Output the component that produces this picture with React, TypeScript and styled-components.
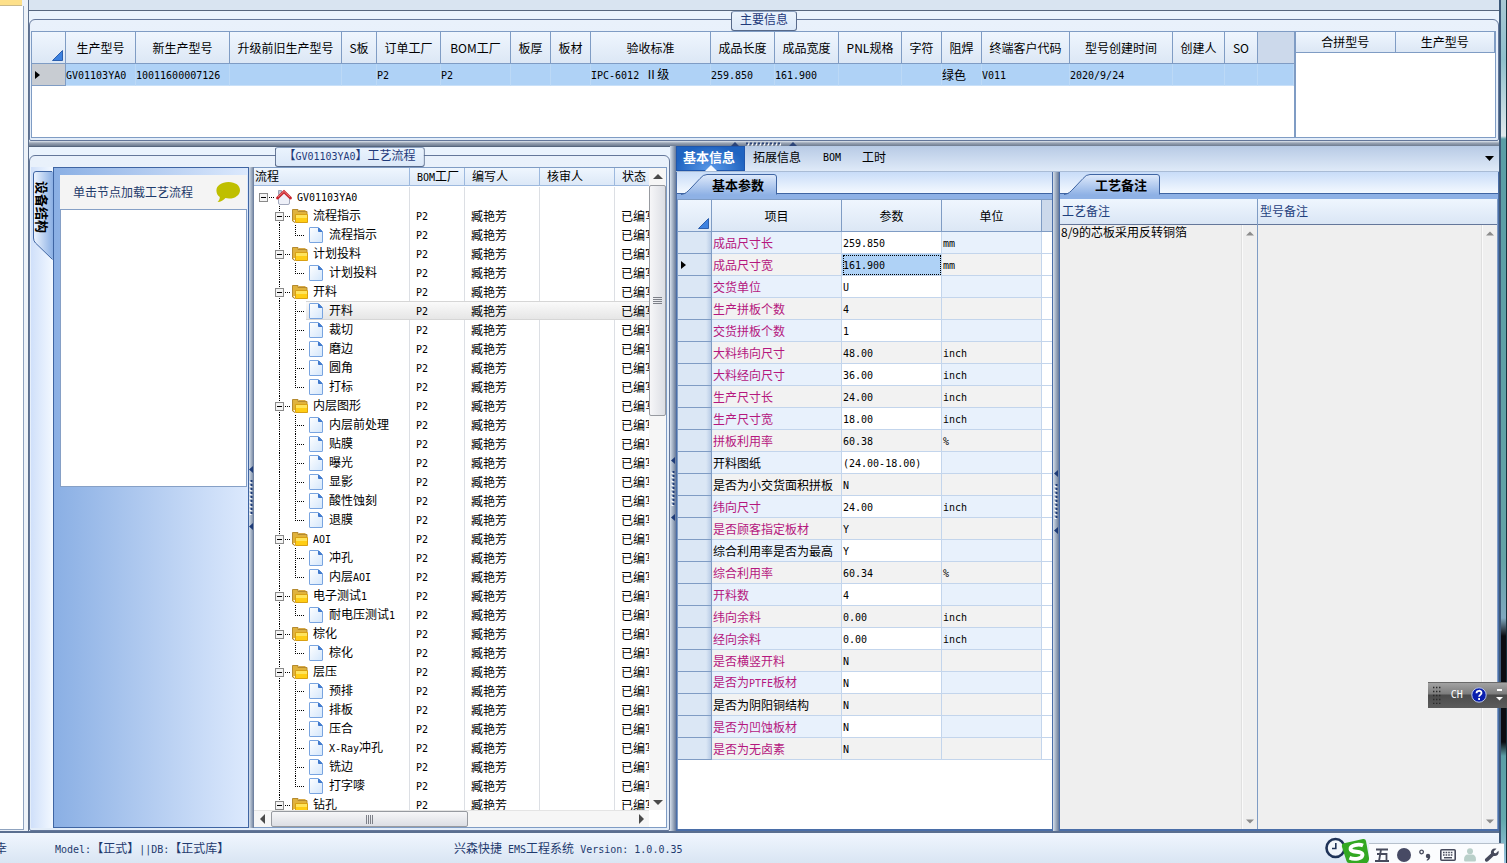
import React from 'react';
import styled, { createGlobalStyle, css } from 'styled-components';

const GlobalStyle = createGlobalStyle`
  * { box-sizing: border-box; }
  body { margin: 0; overflow: hidden; }
  button { border: 0; padding: 0; background: none; font: inherit; color: inherit; }
  table { border-collapse: separate; border-spacing: 0; table-layout: fixed; }
  th, td { padding: 0; font-weight: 400; text-align: left; white-space: nowrap; overflow: hidden; }
`;

const sans = '"Noto Sans CJK SC", "Noto Sans", sans-serif';
const line = '#7f9cc4';

/* ---------- shared text ---------- */

const Half = styled.span`
  font-family: "DejaVu Sans Mono", monospace;
  font-size: 10px;
  white-space: pre;
`;

const Txt = ({ children }: { children: string }) => (
  <>
    {children.split(/([\x20-\x7e]+)/).map((part, i) =>
      i % 2 ? <Half key={i}>{part}</Half> : part,
    )}
  </>
);

/* ---------- page frame ---------- */

const Page = styled.div`
  height: 100vh;
  display: flex;
  font: 12px/16px ${sans};
  color: #000;
  background: #e4ebf4;
`;

const AppWindow = styled.div`
  flex: 1;
  min-width: 0;
  display: flex;
  flex-direction: column;
`;

const DesktopEdge = styled.div`
  width: 8px;
  border-left: 2px solid #3c5878;
  border-right: 1px solid #16303c;
  background: linear-gradient(#a8c8d4 0, #8fc0cc 60px, #dfe9ec 136px, #5a9ea6 139px, #63a3a6 560px, #7fa8bf 618px, #0b0d12 636px, #0b0d12 742px, #5a9ea6 756px, #63a9ad 820px, #9cc4e0 100%);
`;

const Body = styled.div`
  flex: 1;
  min-height: 0;
  display: flex;
`;

const LeftDock = styled.div`
  width: 28px;
  display: flex;
  flex-direction: column;
  background: linear-gradient(90deg, #e6ecf5, #eef3f9);

  &::before {
    content: '';
    width: 22px;
    height: 5px;
    background: #fde08a;
    border-bottom: 1px solid #c9b98a;
  }
  &::after {
    content: '';
    flex: 1;
    width: 23px;
    margin-bottom: 1px;
    background: #fff;
    border-right: 1px solid #8fa3bf;
    border-bottom: 1px solid #8fa3bf;
  }
`;

const Workspace = styled.main`
  flex: 1;
  min-width: 0;
  display: flex;
  flex-direction: column;
  border-left: 1px solid #5c6f8c;
`;

const Ribbon = styled.div`
  height: 10px;
  background: #d9e4f1;
`;

const Group = styled.section<{ $width?: number }>`
  display: flex;
  flex-direction: column;
  padding-top: 8px;
  border-top: 1px solid #56667e;
  background: #eaf3fd;
  min-height: 0;
  ${(p) => p.$width && css`flex: 0 0 ${p.$width}px;`}
`;

const Frame = styled.div`
  position: relative;
  flex: 1;
  min-height: 0;
  display: flex;
  padding: 11px 2px 2px 1px;
  border: 1px solid #64779a;
  border-radius: 6px 6px 2px 2px;
  background: linear-gradient(#e9f1fb, #e3edf9);
`;

const Legend = styled.h2`
  position: absolute;
  top: -9px;
  left: 50%;
  transform: translateX(-50%);
  height: 20px;
  margin: 0;
  padding: 0 8px;
  font: 12px/14px ${sans};
  white-space: nowrap;
  color: #1f3a7a;
  border: 1px solid #56698a;
  border-top-color: #8ea3c2;
  border-radius: 3px;
  background: linear-gradient(#eaf3fd, #dbe8f8);
`;

/* ---------- splitters ---------- */

const SplitH = styled.div`
  height: 5px;
  display: flex;
  justify-content: center;
  background: linear-gradient(#dfe6ef, #9aa5b5 40%, #6d7b90);
`;

const SplitV = styled.div<{ $w: number }>`
  flex: 0 0 ${(p) => p.$w}px;
  display: flex;
  flex-direction: column;
  justify-content: center;
  align-items: center;
  background: linear-gradient(90deg, #d5dfeb, #94a3b8 60%, #66799a);
`;

const GripV = () => (
  <svg width="5" height="64" viewBox="0 0 5 64" aria-hidden="true">
    <path d="M4 0v7L0 3.500zM4 57v7L0 60.500z" fill="#1f3c78" />
    <path d="M1.500 15v34" stroke="#fff" strokeWidth="2" strokeDasharray="2 2" />
    <path d="M2.500 14v34" stroke="#1f3c78" strokeWidth="2" strokeDasharray="2 2" />
  </svg>
);

const GripH = () => (
  <svg width="66" height="5" viewBox="0 0 66 5" aria-hidden="true">
    <path d="M0 5h8L4 1zM58 5h8L62 1z" fill="#2c4478" />
    <path d="M16 3.500h35" stroke="#fff" strokeWidth="2" strokeDasharray="2 2" />
    <path d="M15 2.500h35" stroke="#2c4478" strokeWidth="2" strokeDasharray="2 2" />
  </svg>
);

/* ---------- data grids ---------- */

const GridPane = styled.div<{ $width?: number }>`
  flex: ${(p) => (p.$width ? `0 0 ${p.$width}px` : '1')};
  min-width: 0;
  height: 107px;
  overflow: hidden;
  border: 1px solid ${line};
  background: #fff;
`;

const Grid = styled.table`
  width: 100%;
`;

const HeadCell = styled.th<{ $h: number; $last?: boolean }>`
  height: ${(p) => p.$h}px;
  text-align: center;
  border-right: 1px solid ${line};
  border-bottom: 1px solid ${line};
  background: linear-gradient(#eff6fe, #dce7f5);
  ${(p) => p.$last && css`border-right: 0; background: #ccd9eb;`}
`;

const CornerCell = styled(HeadCell)`
  text-align: right;
  vertical-align: bottom;
  svg { display: block; margin: 0 2px 2px auto; }
`;

const Corner = ({ h }: { h: number }) => (
  <CornerCell $h={h} aria-label="全选">
    <svg width="11" height="11" viewBox="0 0 11 11" aria-hidden="true">
      <path d="M10.500 .5v10H.5z" fill="#3d82e0" stroke="#2c5fae" />
    </svg>
  </CornerCell>
);

const MainCell = styled.td`
  height: 22px;
  background: #afd2f6;
  border-right: 1px solid #bcd9f6;
  border-bottom: 1px solid #c9e0f8;
`;

const MainRowHead = styled(MainCell)`
  background: #c8ccd2;
  border-color: ${line};
  svg { display: block; margin-left: 3px; }
`;

const RowArrow = () => (
  <svg width="5" height="8" viewBox="0 0 5 8" aria-label="当前行">
    <path d="M0 0l5 4-5 4z" fill="#000" />
  </svg>
);

const mainCols: [string, number, string][] = [
  ['生产型号', 70, 'GV01103YA0'],
  ['新生产型号', 94, '10011600007126'],
  ['升级前旧生产型号', 112, ''],
  ['S板', 35, ''],
  ['订单工厂', 64, 'P2'],
  ['BOM工厂', 70, 'P2'],
  ['板厚', 40, ''],
  ['板材', 40, ''],
  ['验收标准', 120, 'IPC-6012 Ⅱ级'],
  ['成品长度', 64, '259.850'],
  ['成品宽度', 64, '161.900'],
  ['PNL规格', 63, ''],
  ['字符', 40, ''],
  ['阻焊', 40, '绿色'],
  ['终端客户代码', 88, 'V011'],
  ['型号创建时间', 103, '2020/9/24'],
  ['创建人', 52, ''],
  ['SO', 33, ''],
];

const MainGrid = () => (
  <GridPane>
    <Grid>
      <colgroup>
        <col width={34} />
        {mainCols.map(([name, w]) => <col key={name} width={w} />)}
        <col />
      </colgroup>
      <thead>
        <tr>
          <Corner h={32} />
          {mainCols.map(([name]) => <HeadCell key={name} $h={32}>{name}</HeadCell>)}
          <HeadCell $h={32} $last />
        </tr>
      </thead>
      <tbody>
        <tr>
          <MainRowHead><RowArrow /></MainRowHead>
          {mainCols.map(([name, , value]) => <MainCell key={name}><Txt>{value}</Txt></MainCell>)}
          <MainCell />
        </tr>
      </tbody>
    </Grid>
  </GridPane>
);

const MergeGrid = () => (
  <GridPane $width={201}>
    <Grid>
      <thead>
        <tr>
          <HeadCell $h={21}>合拼型号</HeadCell>
          <HeadCell $h={21}>生产型号</HeadCell>
        </tr>
      </thead>
    </Grid>
  </GridPane>
);

/* ---------- structure side panel ---------- */

const Nav = styled.div`
  flex: 0 0 218px;
  display: flex;
`;

const NavStrip = styled.div`
  flex: 0 0 21px;
  padding: 4px 0 0 2px;
  background: linear-gradient(90deg, #d0e0fa, #f2f8ff);
`;

const NavTab = styled.button`
  position: relative;
  display: block;
  width: 20px;
  height: 90px;
  z-index: 1;
  svg { position: absolute; inset: 0; }
`;

const NavTabText = styled.span`
  position: relative;
  display: block;
  height: 90px;
  padding-top: 10px;
  writing-mode: vertical-rl;
  text-orientation: sideways;
  text-align: left;
  font: bold 13px/18px ${sans};
`;

const NavPanel = styled.div`
  flex: 1;
  padding: 7px 1px 0 6px;
  border: 1px solid #3f65a3;
  background: linear-gradient(90deg, #8aafe4, #dce9fd);
`;

const NavHint = styled.div`
  display: flex;
  align-items: center;
  justify-content: space-between;
  height: 34px;
  padding: 0 6px 0 13px;
  color: #1f3a6a;
  background: #f4f4f4;
`;

const NavBox = styled.div`
  height: 278px;
  background: #fff;
  border: 1px solid #86a0c6;
`;

const Bubble = () => (
  <svg width="25" height="22" viewBox="0 0 25 22" aria-hidden="true">
    <path d="M12.500 1C19.500 1 24 4.600 24 9.200s-4.500 8.300-11 8.300c-1.200 0-2.500-.1-3.500-.4C7.500 19.500 5 21 1.500 21c1.500-1.300 2.300-3 2.300-5C1.500 14.500.4 12 .4 9.500.4 4.600 5.500 1 12.500 1z" fill="#bfbf00" />
  </svg>
);

/* ---------- process tree ---------- */

const TreePane = styled.div`
  flex: 1;
  min-width: 0;
  display: grid;
  grid-template-columns: minmax(0, 1fr) 17px;
  grid-template-rows: minmax(0, 1fr) 17px;
  border: 1px solid ${line};
  border-left: 0;
  background: #fff;
`;

const TreeView = styled.div`
  overflow: hidden;
`;

const TreeTable = styled.table`
  width: 434px;
`;

const TreeHead = styled.th`
  height: 18px;
  line-height: 15px;
  vertical-align: top;
  padding-left: 7px;
  border-right: 1px solid #9db9de;
  border-bottom: 1px solid #9db9de;
  background: linear-gradient(#eff6fe, #dce8f7);
  &:first-child { padding-left: 1px; }
`;

const TreeCell = styled.td<{ $on?: boolean }>`
  height: 19px;
  padding-left: 6px;
  border-right: 1px solid #dcdfe4;
  ${(p) => p.$on && css`
    background: linear-gradient(#d6d6d6 0 1px, #fafafa 1px, #e6e6e6 18px, #d6d6d6 18px);
    border-right-color: transparent;
  `}
  &:first-child {
    padding-left: 3px;
    ${(p) => p.$on && css`
      background-repeat: no-repeat;
      background-position: 52px 0;
    `}
  }
`;

const TreeGap = styled.td`
  height: 1px;
`;

const NodeLabel = styled.div`
  display: flex;
  height: 19px;
  line-height: 17px;
  svg { flex: none; }
`;

const dots = { stroke: '#000', strokeWidth: 1, strokeDasharray: '1 1', fill: 'none' };

const Minus = ({ x }: { x: number }) => (
  <g>
    <rect x={x + 0.5} y="6.500" width="8" height="8" fill="#f4f4f4" stroke="#8a8a8a" />
    <path d={`M${x + 2} 10.500h5`} stroke="#000" />
  </g>
);

const RootGlyph = () => (
  <svg width="40" height="19" viewBox="0 0 40 19" aria-hidden="true">
    <path d="M12 10.500h5" {...dots} />
    <Minus x={2} />
    <path d="M21.500 16V9.500L27 4.500l5.500 5V16q0 1.500-1.500 1.500h-8q-1.500 0-1.500-1.500z" fill="#eef0f8" stroke="#a2a8bc" />
    <path d="M21.500 3.500h3v4h-3z" fill="#c4c8d6" stroke="#9ca2b6" />
    <path d="M20.500 11L27 4.800 33.500 11" fill="none" stroke="#c9252d" strokeWidth="2.800" strokeLinecap="round" />
    <path d="M21 10L27 4.400 33 10" fill="none" stroke="#f09090" strokeWidth=".8" />
  </svg>
);

const FolderGlyph = () => (
  <svg width="56" height="19" viewBox="0 0 56 19" aria-hidden="true">
    <path d="M22.500 0v19" {...dots} />
    <path d="M28 10.500h5" {...dots} />
    <Minus x={18} />
    <path d="M35.500 15v-11.500h5.500v2h9v3" fill="#e0b23c" stroke="#b58a30" />
    <path d="M41.500 4.500h7" stroke="#d8ab4a" />
    <path d="M38.500 8.500h12v8h-12z" fill="#ffcd14" stroke="#d9a012" />
    <path d="M39 9h11v3H39z" fill="#ffe45c" />
    <path d="M35.500 15l2.500 1.500" fill="none" stroke="#a87a1e" />
  </svg>
);

const FileGlyph = ({ last }: { last?: boolean }) => (
  <svg width="72" height="19" viewBox="0 0 72 19" aria-hidden="true">
    <defs>
      <linearGradient id="sheet" x1="0" y1="0" x2="1" y2="1">
        <stop offset="0" stopColor="#fff" />
        <stop offset="1" stopColor="#d3e6fb" />
      </linearGradient>
    </defs>
    <path d="M22.500 0v19" {...dots} />
    <path d={last ? 'M38.500 0v11' : 'M38.500 0v19'} {...dots} />
    <path d="M38 10.500h10" {...dots} />
    <path d="M53 2.500h8.500l4 4V17q0 .5-.5.5H53q-.5 0-.5-.5V3q0-.5.5-.5z" fill="url(#sheet)" stroke="#78a4e0" />
    <path d="M61.500 3v3.500h3.500z" fill="#3e78cc" stroke="#3e78cc" />
  </svg>
);

const groups: [string, string[]][] = [
  ['流程指示', ['流程指示']],
  ['计划投料', ['计划投料']],
  ['开料', ['开料', '裁切', '磨边', '圆角', '打标']],
  ['内层图形', ['内层前处理', '贴膜', '曝光', '显影', '酸性蚀刻', '退膜']],
  ['AOI', ['冲孔', '内层AOI']],
  ['电子测试1', ['耐电压测试1']],
  ['棕化', ['棕化']],
  ['层压', ['预排', '排板', '压合', 'X-Ray冲孔', '铣边', '打字嘜']],
  ['钻孔', []],
];

const TreeRow = ({ glyph, name, root, on }: { glyph: React.ReactNode; name: string; root?: boolean; on?: boolean }) => (
  <tr>
    <TreeCell $on={on}><NodeLabel>{glyph}<span><Txt>{name}</Txt></span></NodeLabel></TreeCell>
    <TreeCell $on={on}>{!root && <Txt>P2</Txt>}</TreeCell>
    <TreeCell $on={on}>{!root && '臧艳芳'}</TreeCell>
    <TreeCell $on={on} />
    <TreeCell $on={on}>{!root && '已编写'}</TreeCell>
  </tr>
);

const Tree = () => (
  <TreeView>
    <TreeTable>
      <colgroup>
        <col width={156} /><col width={55} /><col width={75} /><col width={75} /><col />
      </colgroup>
      <thead>
        <tr>
          <TreeHead>流程</TreeHead>
          <TreeHead><Txt>BOM工厂</Txt></TreeHead>
          <TreeHead>编写人</TreeHead>
          <TreeHead>核审人</TreeHead>
          <TreeHead>状态</TreeHead>
        </tr>
      </thead>
      <tbody>
        <tr><TreeGap colSpan={5} /></tr>
        <TreeRow glyph={<RootGlyph />} name="GV01103YA0" root />
        {groups.map(([name, children], g) => (
          <React.Fragment key={name}>
            <TreeRow glyph={<FolderGlyph />} name={name} />
            {children.map((child, i) => (
              <TreeRow
                key={child}
                glyph={<FileGlyph last={i === children.length - 1} />}
                name={child}
                on={g === 2 && i === 0}
              />
            ))}
          </React.Fragment>
        ))}
      </tbody>
    </TreeTable>
  </TreeView>
);

/* ---------- scroll bars ---------- */

const VBar = styled.div<{ $sep?: boolean }>`
  display: flex;
  flex-direction: column;
  background: #f6f6f6;
  ${(p) => p.$sep && css`background: #efefef; border-left: 1px solid #e0e0e0; box-shadow: inset 1px 0 #fafafa;`}
`;

const HBar = styled.div`
  display: flex;
  background: #f6f6f6;
  border-top: 1px solid #e4e4e4;
`;

const ScrollButton = styled.button`
  flex: 0 0 17px;
  display: flex;
  align-items: center;
  justify-content: center;
`;

const Thumb = styled.div<{ $v?: boolean; $len: number }>`
  flex: 0 1 ${(p) => p.$len}px;
  display: flex;
  align-items: center;
  justify-content: center;
  border: 1px solid #979aa0;
  border-radius: 2px;
  background: linear-gradient(${(p) => (p.$v ? '90deg, ' : '')}#f6f6f8, #dcdee4);
`;

const Track = styled.div`
  flex: 1;
`;

const Arrow = ({ dir, soft }: { dir: 'up' | 'down' | 'left' | 'right'; soft?: boolean }) => {
  const d = { up: 'M0 7l5-5 5 5z', down: 'M0 3l5 5 5-5z', left: 'M7 0L2 5l5 5z', right: 'M3 0l5 5-5 5z' }[dir];
  const size = soft ? 8 : 10;
  return (
    <svg width={size} height={size} viewBox="0 0 10 10" aria-hidden="true">
      <path d={d} fill={soft ? '#8c8c8c' : '#4a4a4a'} />
    </svg>
  );
};

const TreeScroll = () => (
  <>
    <VBar>
      <ScrollButton aria-label="向上"><Arrow dir="up" /></ScrollButton>
      <Thumb $v $len={231}>
        <svg width="9" height="8" viewBox="0 0 9 8" aria-hidden="true"><path d="M0 .5h9M0 2.500h9M0 4.500h9M0 6.500h9" stroke="#7d8088" /></svg>
      </Thumb>
      <Track />
      <ScrollButton aria-label="向下"><Arrow dir="down" /></ScrollButton>
    </VBar>
    <HBar>
      <ScrollButton aria-label="向左"><Arrow dir="left" /></ScrollButton>
      <Thumb $len={197}>
        <svg width="8" height="9" viewBox="0 0 8 9" aria-hidden="true"><path d="M.5 0v9M2.500 0v9M4.500 0v9M6.500 0v9" stroke="#7d8088" /></svg>
      </Thumb>
      <Track />
      <ScrollButton aria-label="向右"><Arrow dir="right" /></ScrollButton>
    </HBar>
  </>
);

/* ---------- right side ---------- */

const Detail = styled.div`
  flex: 1;
  min-width: 0;
  display: flex;
  flex-direction: column;
`;

const TopTabs = styled.div`
  height: 26px;
  display: flex;
  align-items: stretch;
  padding-right: 5px;
  border-bottom: 1px solid #a9bcd6;
  background: linear-gradient(#b7cae5, #dfeaf8);
`;

const TopTab = styled.button<{ $w: number; $on?: boolean }>`
  position: relative;
  width: ${(p) => p.$w}px;
  padding-bottom: 3px;
  line-height: 20px;
  ${(p) => p.$on && css`
    padding-right: 3px;
    font-weight: 700;
    font-size: 13px;
    color: #fff;
    border: 1px solid #1f56ac;
    background: radial-gradient(ellipse at 50% 100%, #5b9ae8, #1f63c0 75%);
  `}
  svg { position: absolute; left: 50%; bottom: -1px; transform: translateX(-50%); }
`;

const TabsMenu = styled.button`
  width: 9px;
  margin-left: auto;
  svg { display: block; }
`;

const Panels = styled.div`
  flex: 1;
  min-height: 0;
  display: flex;
`;

const Panel = styled.section<{ $width?: number }>`
  flex: ${(p) => (p.$width ? `0 0 ${p.$width}px` : '1')};
  min-width: 0;
  display: flex;
  flex-direction: column;
  border: solid #4a6ea8;
  border-width: 0 1px 2px;
`;

const PanelTabs = styled.div`
  height: 27px;
  padding: 2px 0 0 4px;
  border-bottom: 5px solid #8eb1e5;
  background: linear-gradient(#c8dcf8, #f4f9ff 21px, #3f65a3 21px);
`;

const PanelTab = styled.button`
  position: relative;
  display: block;
  width: 97px;
  height: 21px;
  svg { position: absolute; left: 0; top: 0; }
`;

const PanelTabText = styled.span`
  position: relative;
  display: block;
  padding-left: 31px;
  text-align: left;
  font: bold 13px/20px ${sans};
`;

const SlantTab = ({ children }: { children: string }) => (
  <PanelTab>
    <svg width="97" height="21" viewBox="0 0 97 21" aria-hidden="true">
      <defs>
        <linearGradient id="tab" x1="0" y1="0" x2="0" y2="1">
          <stop offset="0" stopColor="#dfeafb" />
          <stop offset="1" stopColor="#8eb1e5" />
        </linearGradient>
      </defs>
      <path d="M1 21C5 20 7 17 10 14L19 4.500Q22 .5 26 .5h67q2.500 0 2.500 2.500v18z" fill="url(#tab)" />
      <path d="M0 20.500C5 20 7 17 10 14L19 4.500Q22 .5 26 .5h67q2.500 0 2.500 2.500v17.500" fill="none" stroke="#3f65a3" />
    </svg>
    <PanelTabText>{children}</PanelTabText>
  </PanelTab>
);

const ParamPane = styled.div`
  flex: 1;
  min-height: 0;
  overflow: hidden;
  background: #fff;
  border-left: 1px solid ${line};
  border-top: 1px solid ${line};
`;

type Tone = 'blue' | 'gray' | 'white';
const tones: Record<Tone, string> = { blue: '#e8f1fc', gray: '#f2f2f2', white: '#fff' };

const ParamCell = styled.td<{ $tone: Tone; $key?: boolean; $picked?: boolean; $end?: boolean }>`
  height: 22px;
  padding-left: 1px;
  background: ${(p) => tones[p.$tone]};
  border-right: 1px solid #c3d5ec;
  border-bottom: 1px solid #c3d5ec;
  color: ${(p) => (p.$key ? '#b5177e' : '#000')};
  ${(p) => p.$picked && css`background: #afd2f6; outline: 1px dotted #000; outline-offset: -2px;`}
  ${(p) => p.$end && css`border-right: 0;`}
`;

const ParamRowHead = styled.td`
  height: 22px;
  border-right: 1px solid ${line};
  border-bottom: 1px solid ${line};
  background: linear-gradient(90deg, #dbe7f5 85%, #b9cce6);
  svg { display: block; margin-left: 3px; }
`;

const params: [string, string, string, boolean?][] = [
  ['成品尺寸长', '259.850', 'mm'],
  ['成品尺寸宽', '161.900', 'mm'],
  ['交货单位', 'U', ''],
  ['生产拼板个数', '4', ''],
  ['交货拼板个数', '1', ''],
  ['大料纬向尺寸', '48.00', 'inch'],
  ['大料经向尺寸', '36.00', 'inch'],
  ['生产尺寸长', '24.00', 'inch'],
  ['生产尺寸宽', '18.00', 'inch'],
  ['拼板利用率', '60.38', '%'],
  ['开料图纸', '(24.00-18.00)', '', true],
  ['是否为小交货面积拼板', 'N', '', true],
  ['纬向尺寸', '24.00', 'inch'],
  ['是否顾客指定板材', 'Y', ''],
  ['综合利用率是否为最高', 'Y', '', true],
  ['综合利用率', '60.34', '%'],
  ['开料数', '4', ''],
  ['纬向余料', '0.00', 'inch'],
  ['经向余料', '0.00', 'inch'],
  ['是否横竖开料', 'N', ''],
  ['是否为PTFE板材', 'N', ''],
  ['是否为阴阳铜结构', 'N', '', true],
  ['是否为凹蚀板材', 'N', ''],
  ['是否为无卤素', 'N', ''],
];

const ParamGrid = () => (
  <ParamPane>
    <Grid>
      <colgroup>
        <col width={34} /><col width={130} /><col width={100} /><col width={100} /><col />
      </colgroup>
      <thead>
        <tr>
          <Corner h={32} />
          <HeadCell $h={32}>项目</HeadCell>
          <HeadCell $h={32}>参数</HeadCell>
          <HeadCell $h={32}>单位</HeadCell>
          <HeadCell $h={32} $last />
        </tr>
      </thead>
      <tbody>
        {params.map(([name, value, unit, plain], i) => {
          const tone: Tone = i % 2 ? 'gray' : 'blue';
          return (
            <tr key={name}>
              <ParamRowHead>{i === 1 && <RowArrow />}</ParamRowHead>
              <ParamCell $tone={tone} $key={!plain}><Txt>{name}</Txt></ParamCell>
              <ParamCell $tone={i % 2 ? 'gray' : 'white'} $picked={i === 1}><Txt>{value}</Txt></ParamCell>
              <ParamCell $tone={tone}><Txt>{unit}</Txt></ParamCell>
              <ParamCell $tone="white" $end />
            </tr>
          );
        })}
      </tbody>
    </Grid>
  </ParamPane>
);

const Notes = styled.div`
  flex: 1;
  min-height: 0;
  display: flex;
`;

const Note = styled.div<{ $width?: number }>`
  flex: ${(p) => (p.$width ? `0 0 ${p.$width}px` : '1')};
  min-width: 0;
  display: flex;
  flex-direction: column;
  border-right: 1px solid ${line};
`;

const NoteTitle = styled.label`
  height: 26px;
  padding-left: 2px;
  line-height: 24px;
  color: #1f3f7c;
  background: linear-gradient(#eff6fe, #dae6f5);
  border-bottom: 1px solid #64779a;
`;

const NoteBody = styled.div`
  flex: 1;
  min-height: 0;
  display: grid;
  grid-template-columns: minmax(0, 1fr) 16px;
`;

const NoteText = styled.textarea`
  resize: none;
  border: 0;
  outline: 0;
  padding: 0 1px;
  font: 12px/14px ${sans};
  color: #000;
  background: #efefef;
  overflow: hidden;
`;

const NoteField = ({ id, title, text, width }: { id: string; title: string; text: string; width?: number }) => (
  <Note $width={width}>
    <NoteTitle htmlFor={id}>{title}</NoteTitle>
    <NoteBody>
      <NoteText id={id} readOnly defaultValue={text} />
      <VBar $sep>
        <ScrollButton aria-label="向上"><Arrow dir="up" soft /></ScrollButton>
        <Track />
        <ScrollButton aria-label="向下"><Arrow dir="down" soft /></ScrollButton>
      </VBar>
    </NoteBody>
  </Note>
);

/* ---------- status bar ---------- */

const StatusBar = styled.footer`
  height: 32px;
  display: flex;
  padding-top: 6px;
  line-height: 18px;
  color: #1f3a6e;
  border-top: 2px solid #5a6f90;
  background: linear-gradient(#f0f6fe, #d9e5f3);
`;

const User = styled.span`
  width: 55px;
  overflow: hidden;
  display: flex;
`;

const UserTail = styled.span`
  width: 7px;
  display: flex;
  justify-content: flex-end;
`;

const Model = styled.span`
  width: 399px;
  white-space: pre;
`;

/* ---------- floating bars ---------- */

const LangBar = styled.div`
  position: fixed;
  right: 0;
  top: 682px;
  width: 79px;
  height: 26px;
  display: flex;
  align-items: center;
  justify-content: space-between;
  padding: 0 4px;
  color: #fff;
  background: linear-gradient(#6a6a6a 0 1px, #a3a3a3 1px, #7c7c7c 12px, #4b4b4b 13px, #5c5c5c);
`;

const ImeBar = styled.div`
  position: fixed;
  right: 3px;
  bottom: 0;
  display: flex;
  align-items: flex-end;
  svg { display: block; }
`;

const ImeTray = styled.div`
  display: flex;
  align-items: center;
  justify-content: space-between;
  width: 135px;
  height: 20px;
  padding: 3px 5px 0 6px;
  border-top: 1px solid #b6c0cc;
  background: #fbfcfe;
`;

const Lang = () => (
  <LangBar>
    <svg width="10" height="18" viewBox="0 0 10 18" aria-hidden="true">
      <path d="M1 1.500h8M1 5.500h8M1 9.500h8M1 13.500h8M1 17.500h8" stroke="#2a2a2a" strokeWidth="1.400" strokeDasharray="1.400 1.600" />
    </svg>
    <Half>CH</Half>
    <svg width="16" height="16" viewBox="0 0 16 16" aria-label="帮助">
      <circle cx="8" cy="8" r="7.200" fill="#0a1fae" stroke="#b8c4e8" />
      <path d="M5.500 6.200C5.500 3 10.500 3 10.500 6c0 1.800-2.400 1.900-2.400 3.700M8.100 11v2" fill="none" stroke="#fff" strokeWidth="1.800" />
    </svg>
    <svg width="7" height="14" viewBox="0 0 7 14" aria-hidden="true">
      <path d="M1 2h5" stroke="#fff" strokeWidth="2" />
      <path d="M0 9h7l-3.500 3.500z" fill="#fff" />
    </svg>
  </LangBar>
);

const Ime = () => (
  <ImeBar>
    <svg width="44" height="27" viewBox="0 0 44 27" aria-label="输入法">
      <circle cx="10.500" cy="12" r="9" fill="#f2f6fb" stroke="#1f3358" strokeWidth="2.600" />
      <path d="M10.800 7v5.500H7" fill="none" stroke="#1f3358" strokeWidth="1.600" />
      <path d="M18 7.500L38 3q2.500-.5 3 2l3 17q.3 3-2 5H24q-2 0-2.500-2L17 11q-.5-3 1-3.500z" fill="#33a822" />
      <path d="M38 9.500C34 7.800 25.200 9 25.500 13c.3 4.200 11.500 1.300 12 5.500.4 4.300-8 5.300-13 3.300" fill="none" stroke="#fff" strokeWidth="3.800" />
    </svg>
    <ImeTray>
      <svg width="14" height="14" viewBox="0 0 14 14" aria-label="五笔">
        <path d="M1 1.500h12M6 1.500L4 13M2 6h9.500v7M0 13h14" fill="none" stroke="#474a5c" strokeWidth="1.800" />
      </svg>
      <svg width="14" height="14" viewBox="0 0 14 14" aria-hidden="true"><circle cx="7" cy="7" r="7" fill="#474a64" /></svg>
      <svg width="12" height="12" viewBox="0 0 12 12" aria-hidden="true">
        <circle cx="2.600" cy="3" r="1.800" fill="none" stroke="#474a5c" strokeWidth="1.300" />
        <circle cx="9" cy="7" r="2.200" fill="#474a5c" />
        <path d="M11.200 7q.3 3.500-3.200 4.800l-.5-.8Q9.300 10 9.200 8z" fill="#474a5c" />
      </svg>
      <svg width="16" height="12" viewBox="0 0 16 12" aria-hidden="true">
        <rect x=".8" y=".8" width="14.400" height="10.400" rx="1" fill="none" stroke="#474a5c" strokeWidth="1.600" />
        <path d="M3 3.500h10M3 6h10" stroke="#474a5c" strokeWidth="1.400" strokeDasharray="1.600 1" />
        <path d="M4 8.700h8" stroke="#474a5c" strokeWidth="1.400" />
      </svg>
      <svg width="12" height="14" viewBox="0 0 12 14" aria-hidden="true">
        <circle cx="6" cy="3.300" r="3" fill="#b9cfc9" />
        <path d="M0 12q0-5.500 4-5.500h4q4 0 4 5.500 0 1.500-1.500 1.500h-9Q0 13.500 0 12z" fill="#b9cfc9" />
      </svg>
      <svg width="15" height="14" viewBox="0 0 15 14" aria-hidden="true">
        <path d="M12.500.8L9.800 3.300l.3 1.700 1.800.3 2.500-2.600c1.200 3.500-1.600 6-4.800 5.200L4 13.300c-1.800 1.400-4-.7-2.700-2.600L7 5.500C6.200 2.200 9-.6 12.500.8z" fill="#474a5c" />
      </svg>
    </ImeTray>
  </ImeBar>
);

/* ---------- page ---------- */

const BottomRow = styled.div`
  flex: 1;
  min-height: 0;
  display: flex;
`;

export default function App() {
  return (
    <Page>
      <GlobalStyle />
      <AppWindow>
        <Body>
          <LeftDock />
          <Workspace>
            <Ribbon />
            <Group>
              <Frame>
                <Legend>主要信息</Legend>
                <MainGrid />
                <MergeGrid />
              </Frame>
            </Group>
            <SplitH><GripH /></SplitH>
            <BottomRow>
              <Group $width={641}>
                <Frame>
                  <Legend><Txt>【GV01103YA0】工艺流程</Txt></Legend>
                  <Nav>
                    <NavStrip>
                      <NavTab>
                        <svg width="20" height="90" viewBox="0 0 20 90" aria-hidden="true">
                          <defs>
                            <linearGradient id="side" x1="0" y1="0" x2="1" y2="0">
                              <stop offset="0" stopColor="#f0f6ff" />
                              <stop offset="1" stopColor="#8aafe4" />
                            </linearGradient>
                          </defs>
                          <path d="M20 .5H3Q.5.5.5 3v64q0 3 2 5L20 88.500z" fill="url(#side)" />
                          <path d="M19 .5H3Q.5.5.5 3v64q0 3 2 5L19.500 88.500" fill="none" stroke="#3f65a3" />
                        </svg>
                        <NavTabText>设备结构</NavTabText>
                      </NavTab>
                    </NavStrip>
                    <NavPanel>
                      <NavHint>单击节点加载工艺流程<Bubble /></NavHint>
                      <NavBox />
                    </NavPanel>
                  </Nav>
                  <SplitV $w={5}><GripV /></SplitV>
                  <TreePane>
                    <Tree />
                    <TreeScroll />
                  </TreePane>
                </Frame>
              </Group>
              <SplitV $w={6}><GripV /></SplitV>
              <Detail>
                <TopTabs>
                  <TopTab $w={69} $on>
                    基本信息
                    <svg width="12" height="6" viewBox="0 0 12 6" aria-hidden="true"><path d="M0 6l6-6 6 6z" fill="#f4f9ff" /></svg>
                  </TopTab>
                  <TopTab $w={64}>拓展信息</TopTab>
                  <TopTab $w={46}><Half>BOM</Half></TopTab>
                  <TopTab $w={38}>工时</TopTab>
                  <TabsMenu aria-label="更多">
                    <svg width="9" height="5" viewBox="0 0 9 5" aria-hidden="true"><path d="M0 0h9L4.500 5z" fill="#000" /></svg>
                  </TabsMenu>
                </TopTabs>
                <Panels>
                  <Panel $width={377}>
                    <PanelTabs><SlantTab>基本参数</SlantTab></PanelTabs>
                    <ParamGrid />
                  </Panel>
                  <SplitV $w={6}><GripV /></SplitV>
                  <Panel>
                    <PanelTabs><SlantTab>工艺备注</SlantTab></PanelTabs>
                    <Notes>
                      <NoteField id="craft-note" title="工艺备注" text="8/9的芯板采用反转铜箔" width={198} />
                      <NoteField id="model-note" title="型号备注" text="" />
                    </Notes>
                  </Panel>
                </Panels>
              </Detail>
            </BottomRow>
          </Workspace>
        </Body>
        <StatusBar>
          <User><UserTail>幸</UserTail></User>
          <Model><Txt>Model:【正式】||DB:【正式库】</Txt></Model>
          <span><Txt>兴森快捷 EMS工程系统 Version: 1.0.0.35</Txt></span>
        </StatusBar>
      </AppWindow>
      <DesktopEdge />
      <Lang />
      <Ime />
    </Page>
  );
}
